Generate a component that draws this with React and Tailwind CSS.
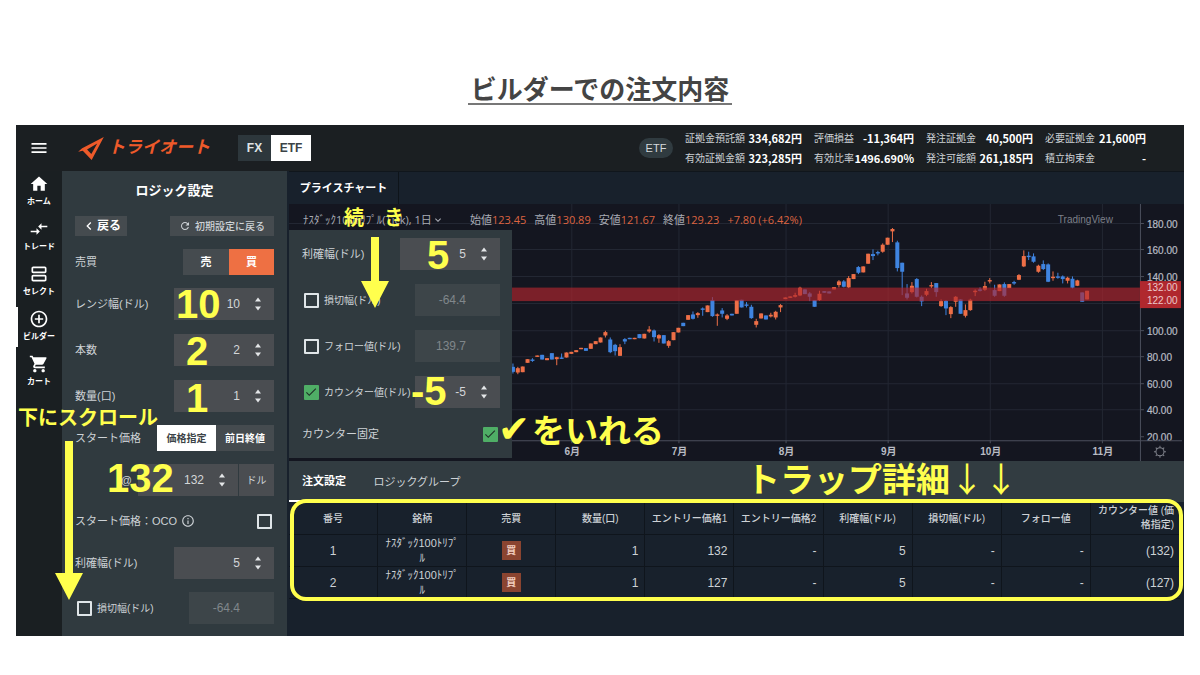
import React from "react";
import {
  MdMenu,
  MdHome,
  MdCompareArrows,
  MdOutlineViewAgenda,
  MdAddCircleOutline,
  MdShoppingCart,
  MdRefresh,
  MdInfoOutline,
  MdChevronLeft,
  MdCheck,
  MdExpandMore,
} from "react-icons/md";

/* ---------- chart data ---------- */

// Each candle: direction, body top, body bottom, wick top, wick bottom (in thirds of a chart pixel)
const CANDLES = [
  ["d", 500, 515, 490, 520], ["u", 504, 517, 500, 522], ["u", 499, 516], ["u", 477, 488], ["d", 478, 482, 474, 485],
  ["u", 466, 470], ["d", 464, 478], ["u", 474, 480], ["d", 459, 478], ["u", 471, 477, 470, 495],
  ["d", 472, 475, 460, 476], ["u", 457, 472], ["u", 455, 461], ["u", 450, 456], ["u", 443, 447],
  ["d", 444, 452], ["u", 430, 446], ["u", 423, 432], ["u", 412, 427], ["u", 396, 406, 392, 412],
  ["d", 418, 456, 412, 459], ["d", 434, 453, 431, 466], ["u", 441, 467, 432, 467], ["d", 417, 424, 414, 432], ["d", 413, 417],
  ["u", 413, 417], ["d", 402, 414], ["u", 401, 415], ["u", 388, 394, 378, 398], ["d", 391, 411, 388, 424],
  ["u", 405, 415, 402, 428], ["d", 405, 430], ["u", 423, 437, 420, 443], ["u", 396, 420], ["u", 383, 397],
  ["d", 368, 378], ["u", 345, 359], ["d", 343, 356, 334, 358], ["u", 339, 345, 336, 353], ["d", 325, 329, 322, 347],
  ["u", 316, 336], ["d", 300, 348, 291, 350], ["u", 343, 347, 340, 377], ["d", 331, 341, 324, 352], ["u", 346, 356, 342, 360],
  ["d", 341, 346], ["u", 300, 341], ["d", 299, 322], ["d", 313, 317, 306, 322], ["d", 320, 354, 314, 356],
  ["u", 363, 374, 356, 382], ["u", 340, 355], ["d", 346, 358], ["u", 344, 349, 338, 352], ["u", 335, 352, 332, 358],
  ["u", 315, 322, 312, 336], ["u", 292, 297], ["u", 289, 293], ["u", 285, 290, 278, 292], ["u", 263, 286, 260, 288],
  ["d", 268, 282], ["d", 280, 290, 276, 303], ["d", 300, 320], ["u", 281, 300, 272, 302], ["d", 273, 278],
  ["d", 274, 280], ["u", 261, 268], ["u", 244, 255, 240, 262], ["d", 244, 260, 240, 262], ["u", 234, 262, 228, 264],
  ["u", 222, 237], ["d", 201, 218, 198, 222], ["u", 199, 217], ["u", 161, 191], ["d", 162, 168, 148, 180],
  ["d", 156, 160, 152, 166], ["u", 134, 155, 130, 158], ["u", 113, 134], ["u", 87, 94, 84, 126], ["d", 127, 204, 122, 214],
  ["d", 188, 215, 188, 285], ["d", 280, 293, 252, 298], ["u", 257, 276, 246, 280], ["d", 237, 290, 234, 292], ["d", 290, 304, 286, 318],
  ["u", 273, 284, 266, 288], ["u", 255, 259, 246, 264], ["d", 249, 276, 249, 290], ["u", 303, 318, 298, 320], ["d", 302, 325, 300, 345],
  ["u", 321, 342, 318, 354], ["u", 290, 305, 288, 320], ["d", 298, 341], ["u", 330, 347, 313, 352], ["u", 299, 330, 296, 332],
  ["u", 272, 276, 268, 288], ["d", 268, 272, 262, 274], ["u", 258, 269, 245, 272], ["u", 240, 244, 234, 250], ["d", 270, 287, 254, 290],
  ["u", 253, 273], ["d", 252, 287, 247, 290], ["u", 252, 264], ["d", 246, 250, 242, 254], ["u", 225, 239, 222, 240],
  ["u", 168, 199, 151, 201], ["d", 167, 171, 155, 180], ["d", 169, 185, 160, 188], ["u", 197, 215, 194, 218], ["d", 192, 207, 181, 210],
  ["d", 193, 245, 190, 246], ["u", 230, 234, 214, 242], ["d", 229, 233, 218, 236], ["d", 229, 237, 226, 250], ["u", 233, 242, 230, 250],
  ["d", 236, 263, 229, 265], ["u", 241, 257, 239, 258], ["d", 277, 305], ["u", 272, 298],
];

const PRICES = [
  ["180.00", 224], ["160.00", 250], ["140.00", 277], ["100.00", 331],
  ["80.00", 357], ["60.00", 384], ["40.00", 410], ["20.00", 437],
];
const MONTHS = [["6月", 573], ["7月", 680], ["8月", 787], ["9月", 889], ["10月", 991], ["11月", 1103]];

function PriceChart() {
  return (
    <svg viewBox="290 204 894 257" className="block w-full bg-[#141620]" role="img" aria-label="プライスチャート">
      <g stroke="#232733" strokeWidth="1">
        {PRICES.slice(0, 7).map(([p, y]) => <path key={p} d={`M290 ${y - 0.5}H1140`} />)}
        <path d="M290 303.5H1140" />
        {MONTHS.map(([m, x]) => <path key={m} d={`M${x - 0.5} 204V440`} />)}
      </g>
      {CANDLES.map(([dir, top, bottom, wickTop = top, wickBottom = bottom], i) => {
        const x = 513.7 + i * 4.86;
        const color = dir === "u" ? "#ee6f47" : "#3f84e0";
        return (
          <g key={i} fill={color}>
            <rect x={x - 0.5} y={200 + wickTop / 3} width="1" height={(wickBottom - wickTop) / 3} />
            <rect x={x - 2} y={200 + top / 3} width="4" height={Math.max(1.4, (bottom - top) / 3)} />
          </g>
        );
      })}
      <rect x="290" y="287.5" width="850" height="13.5" fill="#b2262d" opacity="0.66" />
      <g stroke="#4b4f5c" strokeWidth="1">
        <path d="M1140.500 204V461" />
        {PRICES.map(([p, y]) => <path key={p} d={`M1140 ${y - 0.5}h4`} />)}
        {MONTHS.map(([m, x]) => <path key={m} d={`M${x - 0.5} 440v3`} />)}
      </g>
      <g fill="#b9bcc4" fontSize="10" fontFamily="'Liberation Sans','Noto Sans CJK JP',sans-serif">
        {PRICES.map(([p, y]) => <text key={p} x="1147" y={y + 3.5} stroke="#b9bcc4" strokeWidth="0.2">{p}</text>)}
        <path d="M290 440.500H1182" stroke="#4b4f5c" />
        {MONTHS.map(([m, x]) => <text key={m} x={x} y="455" textAnchor="middle" fontWeight="700">{m}</text>)}
        <text x="1058" y="223" fill="#7d8089">TradingView</text>
      </g>
      <rect x="1140" y="281" width="41" height="27" fill="#b0282e" />
      <g fill="#ecc9cb" fontSize="10" fontFamily="'Liberation Sans',sans-serif">
        <text x="1147" y="291">132.00</text>
        <text x="1147" y="304">122.00</text>
      </g>
      <g stroke="#80838c" fill="none">
        <circle cx="1160" cy="451.500" r="4" />
        {[0, 45, 90, 135, 180, 225, 270, 315].map((a) => (
          <path key={a} d="M1160 447.500v-2" transform={`rotate(${a} 1160 451.500)`} />
        ))}
      </g>
    </svg>
  );
}

/* ---------- form parts ---------- */

function Spinner() {
  return (
    <svg viewBox="0 0 8 14" className="h-[14px] w-2 shrink-0 fill-[#e3e6e8]" aria-hidden="true">
      <path d="M4 0.500 7 4.500H1zM4 13.500 1 9.500H7z" />
    </svg>
  );
}

function NumberBox({ id, label, value, className = "w-[100px]" }) {
  return (
    <span className={`flex h-8 items-center gap-[14px] bg-[#4a4d51] pr-3 ${className}`}>
      <input
        id={id}
        aria-label={label}
        defaultValue={value}
        className="min-w-0 flex-1 bg-transparent text-right text-[12px] text-[#d3d6d8] outline-none"
      />
      <Spinner />
    </span>
  );
}

function DisabledBox({ label, value }) {
  return (
    <input
      aria-label={label}
      disabled
      defaultValue={value}
      className="h-8 w-[85px] bg-[#3d4549] pr-[34px] text-right text-[12px] text-[#80878b]"
    />
  );
}

function CheckBox({ id, label, checked = false }) {
  return (
    <span className="grid size-4 shrink-0 place-items-center">
      <input
        id={id}
        aria-label={label}
        type="checkbox"
        defaultChecked={checked}
        className="peer col-start-1 row-start-1 size-[15px] appearance-none rounded-[1px] border-2 border-[#dfe5e8] checked:border-[#4fae66] checked:bg-[#4fae66]"
      />
      <MdCheck className="pointer-events-none col-start-1 row-start-1 hidden size-[14px] text-[#203329] peer-checked:block" />
    </span>
  );
}

function Row({ label, htmlFor, children }) {
  return (
    <div className="flex h-8 items-center justify-between">
      <label htmlFor={htmlFor} className="whitespace-nowrap text-[11px]">{label}</label>
      {children}
    </div>
  );
}

function CheckRow({ id, label, checked, children }) {
  return (
    <div className="flex h-8 items-center justify-between">
      <span className="flex items-center gap-[5px] pl-px">
        <CheckBox id={id} checked={checked} />
        <label htmlFor={id} className="whitespace-nowrap text-[10px]">{label}</label>
      </span>
      {children}
    </div>
  );
}

/* ---------- page parts ---------- */

function Logo() {
  return (
    <a href="#top" className="flex items-center gap-1 text-[#ee5a2a]">
      <svg viewBox="0 0 78 70" className="h-[23px] w-[26px]" aria-hidden="true">
        <path fill="currentColor" fillRule="evenodd" d="M78 0 41 70 14 42 0 45 12 34ZM27 38 40 52 58 20Z" />
      </svg>
      <span className="whitespace-nowrap text-[17px] font-bold italic leading-6">トライオート</span>
    </a>
  );
}

const STATS = [
  ["証拠金預託額", "334,682円", "有効証拠金額", "323,285円", "w-[117px]"],
  ["評価損益", "-11,364円", "有効比率", "1496.690%", "w-[100px]"],
  ["発注証拠金", "40,500円", "発注可能額", "261,185円", "w-[107px]"],
  ["必要証拠金", "21,600円", "積立拘束金", "-", "w-[101px]"],
];

function Header() {
  return (
    <header className="flex h-[46px] items-center bg-[#1b1f22]">
      <button aria-label="メニュー" className="flex w-[46px] justify-center text-white"><MdMenu className="size-5" /></button>
      <div className="ml-4"><Logo /></div>
      <div className="ml-7 flex h-[26px] text-[12px] font-bold">
        <button className="w-[33px] bg-[#2d373c] text-[#dfe3e5]">FX</button>
        <button className="w-10 bg-white text-[#3c4347]">ETF</button>
      </div>
      <span className="ml-auto flex h-5 w-[34px] items-center justify-center rounded-full bg-[#303b40] text-[11px] text-[#d5dadc]">ETF</span>
      <div className="ml-3 mr-[38px] flex gap-3 font-['Noto_Sans_CJK_JP',sans-serif] leading-5">
        {STATS.map(([a, av, b, bv, w]) => (
          <dl key={a} className={`grid grid-cols-[auto_auto] justify-between whitespace-nowrap ${w}`}>
            <dt className="text-[10px]">{a}</dt>
            <dd className="text-right text-[11px] font-bold text-white">{av}</dd>
            <dt className="text-[10px]">{b}</dt>
            <dd className="text-right text-[11px] font-bold text-white">{bv}</dd>
          </dl>
        ))}
      </div>
    </header>
  );
}

const NAV = [
  ["ホーム", MdHome], ["トレード", MdCompareArrows], ["セレクト", MdOutlineViewAgenda],
  ["ビルダー", MdAddCircleOutline], ["カート", MdShoppingCart],
];

function Sidebar() {
  return (
    <nav className="flex w-[46px] shrink-0 flex-col gap-[5px] bg-[#1a1f22] pt-px text-white">
      {NAV.map(([name, Icon]) => (
        <a
          key={name}
          href="#nav"
          className={`flex h-10 flex-col items-center justify-center border-l-2 pr-[2px] ${name === "ビルダー" ? "border-white" : "border-transparent"}`}
        >
          <Icon className="size-5" />
          <span className="whitespace-nowrap text-[8px] font-bold leading-4">{name}</span>
        </a>
      ))}
    </nav>
  );
}

function LogicPanel() {
  return (
    <section className="flex w-[225px] shrink-0 flex-col bg-[#303a3f] px-[13px] pb-3">
      <h2 className="pt-2 text-center text-[13px] font-bold leading-6 text-white">ロジック設定</h2>
      <div className="mt-[13px] flex h-5 justify-between">
        <button className="flex w-[52px] items-center justify-center bg-[#454b4f] text-[12px] font-bold text-white">
          <MdChevronLeft className="size-4" />戻る
        </button>
        <button className="flex w-[104px] items-center justify-center gap-1 whitespace-nowrap bg-[#454b4f] text-[10px] font-medium">
          <MdRefresh className="size-3" />初期設定に戻る
        </button>
      </div>
      <div className="mt-[13px] flex h-[26px] items-center justify-between">
        <span className="text-[11px]">売買</span>
        <div className="flex h-full text-[11px] font-bold text-white">
          <button className="w-[46px] bg-[#454b4f]">売</button>
          <button className="w-[45px] bg-[#ee7043]">買</button>
        </div>
      </div>
      <div className="mt-[13px] flex flex-col gap-[14px]">
        <Row label="レンジ幅(ドル)" htmlFor="range"><NumberBox id="range" value="10" /></Row>
        <Row label="本数" htmlFor="lines"><NumberBox id="lines" value="2" /></Row>
        <Row label="数量(口)" htmlFor="qty"><NumberBox id="qty" value="1" /></Row>
      </div>
      <div className="mt-[13px] flex h-[26px] items-center justify-between">
        <span className="whitespace-nowrap text-[11px]">スタート価格</span>
        <div className="flex h-full text-[10px] font-bold">
          <button className="w-[59px] bg-white text-[#3c4347]">価格指定</button>
          <button className="w-[58px] bg-[#454b4f] text-white">前日終値</button>
        </div>
      </div>
      <div className="mt-[13px] flex h-8 items-center justify-end">
        <label htmlFor="start" className="mr-[6px] text-[11px]">@</label>
        <NumberBox id="start" value="132" className="w-[100px]" />
        <span className="ml-px flex h-8 w-[35px] items-center justify-center bg-[#4a4d51] text-[10px]">ドル</span>
      </div>
      <div className="mt-[11px] flex h-7 items-center justify-between pr-[2px]">
        <label htmlFor="oco" className="flex items-center gap-1 whitespace-nowrap text-[11px]">
          スタート価格：OCO<MdInfoOutline className="size-[14px]" />
        </label>
        <CheckBox id="oco" />
      </div>
      <div className="mt-[12px] flex flex-col gap-[13px]">
        <Row label="利確幅(ドル)" htmlFor="profit"><NumberBox id="profit" value="5" /></Row>
        <CheckRow id="loss" label="損切幅(ドル)"><DisabledBox label="損切幅" value="-64.4" /></CheckRow>
      </div>
    </section>
  );
}

function ContinuedPanel() {
  return (
    <section className="absolute left-0 top-[26px] flex w-[223px] flex-col gap-[14px] bg-[#303a3f] pb-3 pl-[13px] pr-[12px] pt-2">
      <Row label="利確幅(ドル)" htmlFor="profit2"><NumberBox id="profit2" value="5" /></Row>
      <CheckRow id="loss2" label="損切幅(ドル)"><DisabledBox label="損切幅の値" value="-64.4" /></CheckRow>
      <CheckRow id="follow" label="フォロー値(ドル)"><DisabledBox label="フォロー値" value="139.7" /></CheckRow>
      <CheckRow id="counter" label="カウンター値(ドル)" checked>
        <NumberBox label="カウンター値" value="-5" className="w-[85px]" />
      </CheckRow>
      <div className="flex h-6 items-center justify-between pr-[2px]">
        <label htmlFor="fixed" className="text-[11px]">カウンター固定</label>
        <CheckBox id="fixed" checked />
      </div>
    </section>
  );
}

const OHLC = [["始値", "123.45"], ["高値", "130.89"], ["安値", "121.67"], ["終値", "129.23"]];

function ChartArea() {
  return (
    <div className="relative">
      <PriceChart />
      <div className="absolute left-[14px] top-1 flex h-6 items-center whitespace-nowrap font-['Open_Sans','Noto_Sans_CJK_JP',sans-serif] text-[11px] text-[#a9acb5]">
        <button className="flex w-[167px] items-center">ﾅｽﾀﾞｯｸ100ﾄﾘﾌﾟﾙ(Tick), 1日<MdExpandMore className="size-3" /></button>
        <div className="flex gap-2">
          {OHLC.map(([k, v]) => (
            <span key={k}>{k}<span className="text-[#dd6440]">{v}</span></span>
          ))}
          <span className="text-[#dd6440]">+7.80 (+6.42%)</span>
        </div>
      </div>
      <ContinuedPanel />
    </div>
  );
}

const HEADS = ["番号", "銘柄", "売買", "数量(口)", "エントリー価格1", "エントリー価格2", "利確幅(ドル)", "損切幅(ドル)", "フォロー値"];

function OrderTable() {
  const cell = "h-8 border-b border-r border-[#0f151c] px-[6px] py-0";
  return (
    <table className="w-full table-fixed border-separate border-spacing-0 text-[12px]">
      <thead className="text-[10px]">
        <tr>
          {HEADS.map((h) => <th key={h} className="h-[33px] whitespace-nowrap border-b border-r border-[#0f151c] p-0 font-medium">{h}</th>)}
          <th className="h-[33px] border-b border-[#0f151c] px-[6px] py-0 text-right font-medium leading-[14px]">カウンター値 (価格指定)</th>
        </tr>
      </thead>
      <tbody>
        {[["1", "132"], ["2", "127"]].map(([n, price]) => (
          <tr key={n}>
            <td className={`${cell} text-center`}>{n}</td>
            <td className={`${cell} text-center text-[11px] leading-[15px]`}>ﾅｽﾀﾞｯｸ100ﾄﾘﾌﾟﾙ</td>
            <td className={cell}>
              <span className="mx-auto flex size-[19px] items-center justify-center bg-[#8a4430] text-[10px] font-bold text-[#f3cfc0]">買</span>
            </td>
            <td className={`${cell} text-right`}>1</td>
            <td className={`${cell} text-right`}>{price}</td>
            <td className={`${cell} text-right`}>-</td>
            <td className={`${cell} text-right`}>5</td>
            <td className={`${cell} text-right`}>-</td>
            <td className={`${cell} text-right`}>-</td>
            <td className="h-8 border-b border-[#0f151c] px-[6px] py-0 text-right">({price})</td>
          </tr>
        ))}
      </tbody>
    </table>
  );
}

/* ---------- yellow notes drawn over the screen ---------- */

function DownArrow({ className, stem }) {
  return (
    <svg viewBox={`0 0 28 ${stem + 27}`} className={`absolute w-7 fill-[#ffff4d] ${className}`} aria-hidden="true">
      <path d={`M10 0h8v${stem}h10l-14 27l-14 -27h10z`} />
    </svg>
  );
}

function Notes() {
  const digit = "absolute text-[40px] font-bold leading-10";
  const jp = "absolute whitespace-nowrap font-['Noto_Sans_CJK_JP',sans-serif] font-bold";
  return (
    <div className="pointer-events-none absolute inset-0 text-[#ffff4d]">
      <span className={`${digit} left-[160px] top-[159px]`}>10</span>
      <span className={`${digit} left-[170px] top-[206px]`}>2</span>
      <span className={`${digit} left-[170px] top-[253px]`}>1</span>
      <span className={`${digit} left-[91px] top-[333px]`}>132</span>
      <span className={`${digit} left-[411px] top-[110px]`}>5</span>
      <span className={`${digit} left-[395px] top-[246px]`}>-5</span>
      <span className={`${jp} left-[2px] top-[280px] text-[20px] leading-6`}>下にスクロール</span>
      <span className={`${jp} left-[328px] top-[80px] flex gap-5 text-[20px] leading-6`}><span>続</span><span>き</span></span>
      <span className={`${jp} left-[482px] top-[284px] flex text-[33px] leading-10`}>
        <span className="w-[34px] font-['DejaVu_Sans'] text-[38px] font-normal italic">✔</span>をいれる
      </span>
      <span className={`${jp} left-[730px] top-[333px] text-[34px] leading-10`}>
        トラップ詳細<span className="font-normal">↓↓</span>
      </span>
      <DownArrow className="left-[345px] top-[112px]" stem={44} />
      <DownArrow className="left-[39px] top-[316px]" stem={132} />
      <div className="absolute left-[274px] right-px top-[374px] h-[102px] rounded-[16px] border-4 border-[#ffff4d]" />
    </div>
  );
}

export default function App() {
  return (
    <main className="min-h-screen bg-white px-4 font-['Liberation_Sans','Noto_Sans_CJK_JP',sans-serif]">
      <h1 className="pb-5 pt-[72px] text-center font-['Noto_Sans_CJK_JP',sans-serif] text-[26px] font-bold leading-8 text-[#444444]">
        <span className="inline-block border-b-2 border-[#777777] px-[3px] leading-[30px]">ビルダーでの注文内容</span>
      </h1>
      <div className="relative bg-[#18212c] text-[#cdd2d6]">
        <Header />
        <div className="flex">
          <Sidebar />
          <LogicPanel />
          <section className="ml-[2px] flex min-w-0 flex-1 flex-col border-t border-[#10161c]">
            <div className="flex h-8 shrink-0">
              <button className="w-[110px] border-r border-[#0e141a] text-[11px] font-bold text-white">プライスチャート</button>
            </div>
            <ChartArea />
            <div className="flex h-[41px] shrink-0 bg-[#323c41] text-[11px]">
              <button className="w-[70px] border-b-2 border-white font-bold text-white">注文設定</button>
              <button className="ml-2 w-[100px]">ロジックグループ</button>
            </div>
            <div className="pr-1"><OrderTable /></div>
          </section>
        </div>
        <Notes />
      </div>
    </main>
  );
}
